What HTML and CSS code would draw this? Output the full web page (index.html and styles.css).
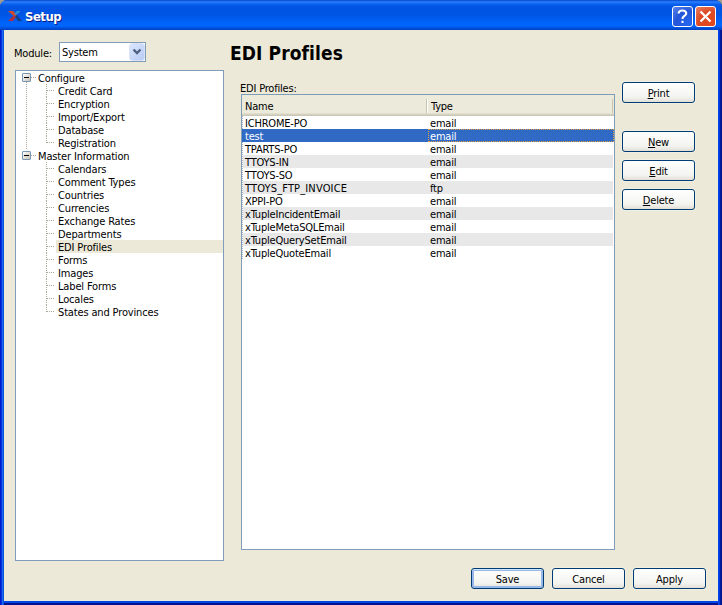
FILE: index.html
```
<!DOCTYPE html>
<html lang="en">
<head>
<meta charset="utf-8">
<title>Setup</title>
<link rel="stylesheet" href="styles.css">
</head>
<body>
<div class="window">
  <header class="titlebar">
    <svg class="logo" width="14" height="12" viewBox="0 0 14 12"><path d="M0 1h5l4 4-2 2z" fill="#d9481f"/><path d="M0 11l5-5 3 1-3 4z" fill="#b22f3c"/><path d="M8 5l5-4h-4L6 4z" fill="#2b8fd4"/><path d="M7 6l2-1 5 6h-4z" fill="#173f86"/></svg>
    <h1>Setup</h1>
    <button class="cap help" aria-label="Help"><svg width="19" height="19" viewBox="0 0 19 19"><path d="M5.700 6.500V5.700Q6.200 3.500 9.500 3.500T13.300 6.300Q13.300 8 11.300 9Q9.500 10 9.500 12M9.500 13.800v2.200" fill="none" stroke="#fff" stroke-width="2.100"/></svg></button>
    <button class="cap close" aria-label="Close"><svg width="19" height="19" viewBox="0 0 19 19"><path d="M4.500 4.500l10 10M14.500 4.500l-10 10" fill="none" stroke="#fff" stroke-width="2.300"/></svg></button>
  </header>
  <main class="content">
    <section class="side">
      <div class="module"><span class="label">Module:</span>
        <div class="select"><span>System</span><i class="drop"><svg width="14" height="16" viewBox="0 0 14 16"><path d="M3.500 5.500L7 9l3.500-3.500" fill="none" stroke="#4d6185" stroke-width="2.400"/></svg></i></div>
      </div>
      <ul class="tree">
        <li class="group joined"><span class="parent"><i class="box"></i>Configure</span>
          <ul>
            <li><span>Credit Card</span></li>
            <li><span>Encryption</span></li>
            <li><span>Import/Export</span></li>
            <li><span>Database</span></li>
            <li><span>Registration</span></li>
          </ul>
        </li>
        <li class="group"><span class="parent"><i class="box"></i>Master Information</span>
          <ul>
            <li><span>Calendars</span></li>
            <li><span>Comment Types</span></li>
            <li><span>Countries</span></li>
            <li><span>Currencies</span></li>
            <li><span>Exchange Rates</span></li>
            <li><span>Departments</span></li>
            <li><span class="current">EDI Profiles</span></li>
            <li><span>Forms</span></li>
            <li><span>Images</span></li>
            <li><span>Label Forms</span></li>
            <li><span>Locales</span></li>
            <li><span>States and Provinces</span></li>
          </ul>
        </li>
      </ul>
    </section>
    <section class="page">
      <h2>EDI Profiles</h2>
      <div class="panel">
        <div class="list">
          <div class="label">EDI Profiles:</div>
          <div class="table">
            <div class="head"><span>Name</span><span>Type</span></div>
            <div class="rows">
              <div class="row"><span>ICHROME-PO</span><span>email</span></div>
              <div class="row selected"><span>test</span><span>email</span></div>
              <div class="row"><span>TPARTS-PO</span><span>email</span></div>
              <div class="row"><span>TTOYS-IN</span><span>email</span></div>
              <div class="row"><span>TTOYS-SO</span><span>email</span></div>
              <div class="row"><span class="wide">TTOYS_FTP_INVOICE</span><span>ftp</span></div>
              <div class="row"><span>XPPI-PO</span><span>email</span></div>
              <div class="row"><span>xTupleIncidentEmail</span><span>email</span></div>
              <div class="row"><span>xTupleMetaSQLEmail</span><span>email</span></div>
              <div class="row"><span>xTupleQuerySetEmail</span><span>email</span></div>
              <div class="row"><span>xTupleQuoteEmail</span><span>email</span></div>
            </div>
          </div>
        </div>
        <div class="actions">
          <button class="btn print"><u>P</u>rint</button>
          <button class="btn"><u>N</u>ew</button>
          <button class="btn"><u>E</u>dit</button>
          <button class="btn"><u>D</u>elete</button>
        </div>
      </div>
      <div class="footer">
        <button class="btn default">Save</button>
        <button class="btn">Cancel</button>
        <button class="btn">Apply</button>
      </div>
    </section>
  </main>
</div>
</body>
</html>
```
FILE: styles.css
```
* { box-sizing: border-box; }
body { margin: 0; background: #a29d8d; }
body, button { font: 11px/13px "DejaVu Sans Condensed", "DejaVu Sans", sans-serif; font-stretch: condensed; letter-spacing: -0.2px; color: #000; }
ul { list-style: none; margin: 0; padding: 0; }
h1, h2 { margin: 0; }

.window { width: 722px; height: 605px; display: flex; flex-direction: column; background: linear-gradient(90deg, #0019cf 0 1px, #0831d9 1px 2px, #166aee 2px 3px, #0855dd 3px 4px, #0046e6 4px 719px, #0036dc 719px 720px, #001ea0 720px 721px, #00138c 721px); border-radius: 7px 7px 0 0; overflow: hidden; }
.titlebar { height: 30px; flex: none; display: flex; align-items: center; gap: 2px; padding: 3px 6px 0 8px;
  background: linear-gradient(#0646c8 0, #2a80ff 2px, #0a62ee 4px, #0054e3 7px, #0055e5 15px, #0062f8 22px, #0066ff 26px, #0050dc 28px, #0040c0 30px); }
.logo { margin: -2px 1px 0 0; }
.titlebar h1 { flex: 1; font: bold 13px/16px "DejaVu Sans Condensed", "DejaVu Sans", sans-serif; font-stretch: condensed; letter-spacing: -0.5px; color: #fff; text-shadow: 1px 1px 0 #0a1883; }
.cap { width: 21px; height: 21px; padding: 0; border: 1px solid #fff; border-radius: 3px; display: block; }
.cap svg { display: block; }
.help { background: radial-gradient(circle at 80% 90%, #2567f0, #2455d8 55%, #5d86ea); }
.close { background: radial-gradient(circle at 80% 90%, #e2491b, #dc4a23 55%, #e98369); }

.content { flex: 1; margin: 0 4px 4px; display: flex; background: #ece9d8; box-shadow: 0 2px #0046e6, 0 4px #00138c; }
.side { width: 209px; margin-left: 11px; padding-top: 12px; }
.module { display: flex; align-items: center; height: 20px; margin-left: -1px; }
.module .label { width: 45px; padding-top: 3px; }
.select { width: 87px; height: 20px; display: flex; justify-content: space-between; align-items: center; padding: 1px 1px 1px 2px; border: 1px solid #7f9db9; background: #fff; }
.drop { width: 14px; height: 16px; border-radius: 2px; background: linear-gradient(135deg, #dce6fd, #b8cbf5); box-shadow: 0 0 0 .5px #b1c4ee; }
.drop svg { display: block; }

.tree { height: 491px; margin-top: 8px; border: 1px solid #7f9db9; background: #fff; line-height: 15px; letter-spacing: -0.15px; }
.group { margin-left: 6px; }
.joined { background: repeating-linear-gradient(#aca899 0 1px, transparent 1px 2px) 4px 11px / 1px 100% no-repeat; }
.parent { height: 13px; display: flex; align-items: flex-start; background: repeating-linear-gradient(90deg, #aca899 0 1px, transparent 1px 2px) 9px 6px / 5px 1px no-repeat; }
.box { width: 9px; height: 9px; margin: 2px 7px 0 0; border: 1px solid #7898b5; border-radius: 1px; background: linear-gradient(#000, #000) center / 5px 1px no-repeat, linear-gradient(135deg, #fff, #c8c1b2); }
.group li { height: 13px; margin-left: 24px; padding-left: 10px; background: repeating-linear-gradient(#aca899 0 1px, transparent 1px 2px) 0 0 / 1px 13px no-repeat, repeating-linear-gradient(90deg, #aca899 0 1px, transparent 1px 2px) 1px 6px / 8px 1px no-repeat; }
.group li:last-child { background-size: 1px 7px, 8px 1px; }
.group li span { display: block; height: 13px; padding-left: 2px; }
.group li .current { background: #ece9d8; }

.page { flex: 1; display: flex; flex-direction: column; margin-left: 6px; }
.page h2 { height: 52px; padding-top: 12px; font: bold 19px/23px "DejaVu Sans Condensed", "DejaVu Sans", sans-serif; font-stretch: condensed; letter-spacing: 0.1px; }
.panel { display: flex; gap: 7px; margin-left: 11px; }
.list { width: 374px; }
.list .label { height: 12px; margin-left: -1px; }
.table { height: 456px; border: 1px solid #7f9db9; background: #fff; }
.head, .row { display: grid; grid-template-columns: 185px 1fr; }
.head { height: 21px; padding-top: 4px; line-height: 15px; background: linear-gradient(#ebeadb 0 18px, #e2decd 18px 19px, #d6d2c2 19px 20px, #cbc7b8 20px); }
.head span { height: 14px; padding-left: 3px; border-right: 1px solid #c7c5b2; box-shadow: 1px 0 #fff; }
.head span + span { padding-left: 4px; margin-right: 1px; box-shadow: none; }
.rows { background: repeating-linear-gradient(#a9b4c6 0 1px, transparent 1px 2px) 0 0 / 1px 100% no-repeat; }
.row { height: 13px; line-height: 15px; }
.row span { height: 13px; padding-left: 3px; }
.row .wide { letter-spacing: 0.15px; }
.row:nth-child(even) { margin-left: 1px; margin-right: 1px; background: #e8e8e8; }
.row:nth-child(even) span { padding-left: 2px; }
.row.selected { margin: 0; color: #fff; background: #316ac5; }
.row.selected span:first-child { padding-left: 3px; }
.row.selected span + span { margin-left: 1px; padding-left: 1px; line-height: 13px; border: 1px dotted #e0a040; }

.actions { display: flex; flex-direction: column; gap: 8px; }
.btn { width: 73px; height: 21px; padding: 1px 0 0 0; border: 1px solid #003c74; border-radius: 3px; background: linear-gradient(#fff, #f3f3ef 75%, #e2dfd5); box-shadow: 0 0 0 1px rgba(255,255,255,.25); }
.btn u { text-underline-offset: 1px; text-decoration-thickness: 1px; }
.print { margin-bottom: 20px; }
.btn.default { box-shadow: inset 0 1px #cee7ff, inset 0 0 0 2px #98b8ea; }
.footer { display: flex; gap: 8px; margin: 18px 0 0 241px; }
```
